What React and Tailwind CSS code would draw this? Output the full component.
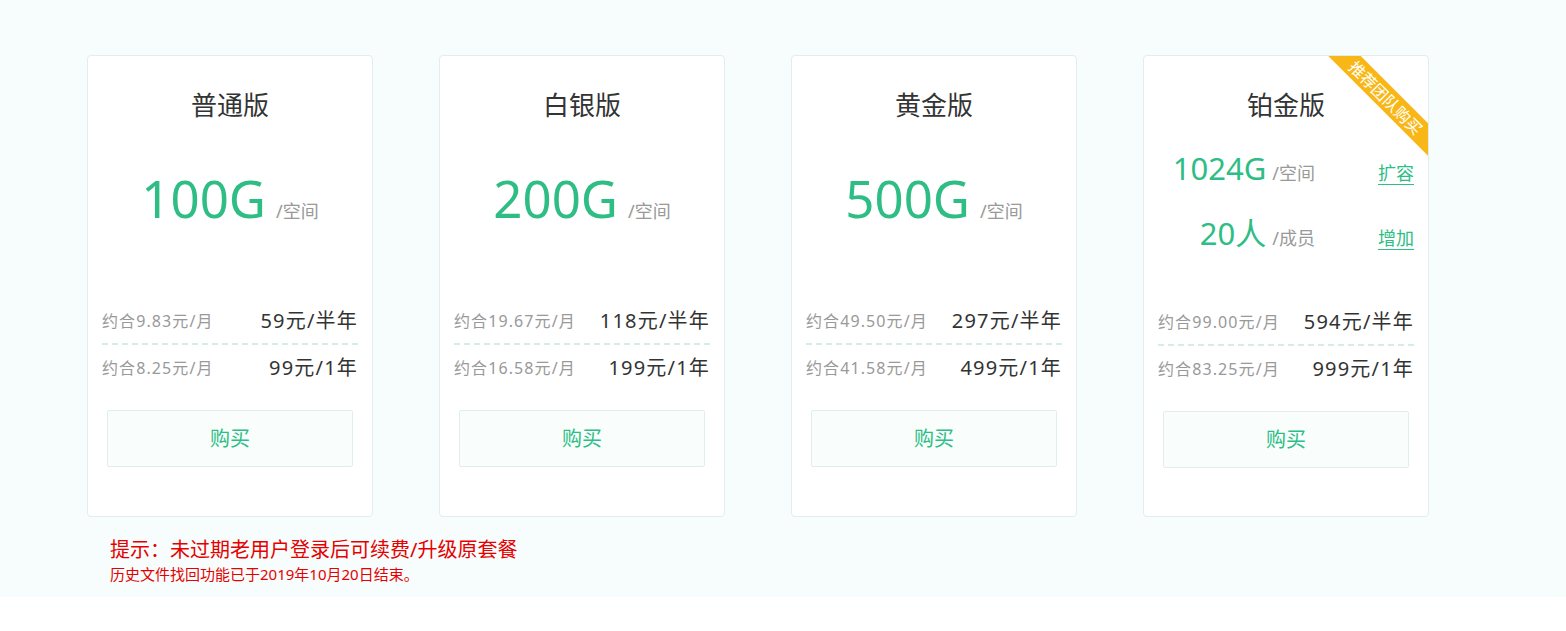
// App.jsx
// Storage plan pricing cards: four tiers, the last one with a team ribbon.

const FONT = { fontFamily: '"Noto Sans", "Noto Sans CJK SC", sans-serif' };

const PLANS = [
  { name: '普通版', size: '100G', half: ['约合9.83元/月', '59元/半年'], year: ['约合8.25元/月', '99元/1年'] },
  { name: '白银版', size: '200G', half: ['约合19.67元/月', '118元/半年'], year: ['约合16.58元/月', '199元/1年'] },
  { name: '黄金版', size: '500G', half: ['约合49.50元/月', '297元/半年'], year: ['约合41.58元/月', '499元/1年'] },
  { name: '铂金版', team: true, half: ['约合99.00元/月', '594元/半年'], year: ['约合83.25元/月', '999元/1年'] },
];

function PriceRow({ row }) {
  return (
    <div className="flex h-[45px] items-center justify-between">
      <span className="text-[16px] tracking-[1.1px] text-[#999]">{row[0]}</span>
      <span className="text-[20px] tracking-[1.2px] text-[#333]">{row[1]}</span>
    </div>
  );
}

function TeamSpec({ big, unit, link }) {
  return (
    <div className="flex h-[65px] items-baseline pt-[18px]">
      <div className="flex w-[157px] items-baseline justify-end gap-[6px]">
        <span className="text-[31px] leading-none text-[#2ebd85]">{big}</span>
        <span className="text-[18px] leading-none text-[#999]">{unit}</span>
      </div>
      <a href="#" className="ml-auto text-[18px] leading-none text-[#2ebd85] underline underline-offset-4">
        {link}
      </a>
    </div>
  );
}

function PlanCard({ plan }) {
  return (
    <div className="relative flex h-[462px] w-[286px] flex-col overflow-hidden rounded-[4px] border border-[#e2eeec] bg-white px-[14px]">
      {plan.team && (
        <div className="absolute left-[162px] top-[30px] flex h-[23px] w-[160px] rotate-45 items-center justify-center bg-[#f9b717] text-[16px] leading-none text-white">
          推荐团队购买
        </div>
      )}
      <div className="pt-[33px] text-center text-[26px] leading-[32px] text-[#333]">{plan.name}</div>
      {plan.team ? (
        <div className="mt-[14px] h-[130px]">
          <TeamSpec big="1024G" unit="/空间" link="扩容" />
          <TeamSpec big="20人" unit="/成员" link="增加" />
        </div>
      ) : (
        <div className="mt-[52px] flex h-[91px] items-baseline justify-center gap-[10px]">
          <span className="text-[51px] leading-none text-[#2ebd85]">{plan.size}</span>
          <span className="text-[18px] leading-none text-[#999]">/空间</span>
        </div>
      )}
      <div className="mt-[34px]">
        <PriceRow row={plan.half} />
        <div className="border-t-2 border-dashed border-[#d6ece7]" />
        <PriceRow row={plan.year} />
      </div>
      <button className="mx-[5px] mt-[20px] h-[57px] rounded-[2px] border border-[#e2eeec] bg-[#f9fefd] text-[20px] text-[#2ebd85]">
        购买
      </button>
    </div>
  );
}

export default function App() {
  return (
    <div className="min-h-screen bg-white" style={FONT}>
      <div className="h-[597px] bg-[#f7fdfc] pl-[87px] pt-[55px]">
        <div className="flex gap-[66px]">
          {PLANS.map((plan) => (
            <PlanCard key={plan.name} plan={plan} />
          ))}
        </div>
        <div className="pl-[23px] pt-[20px] text-[#e60000]">
          <p className="text-[20px] leading-[26px]">提示：未过期老用户登录后可续费/升级原套餐</p>
          <p className="text-[15px] leading-[22px]">历史文件找回功能已于2019年10月20日结束。</p>
        </div>
      </div>
    </div>
  );
}
